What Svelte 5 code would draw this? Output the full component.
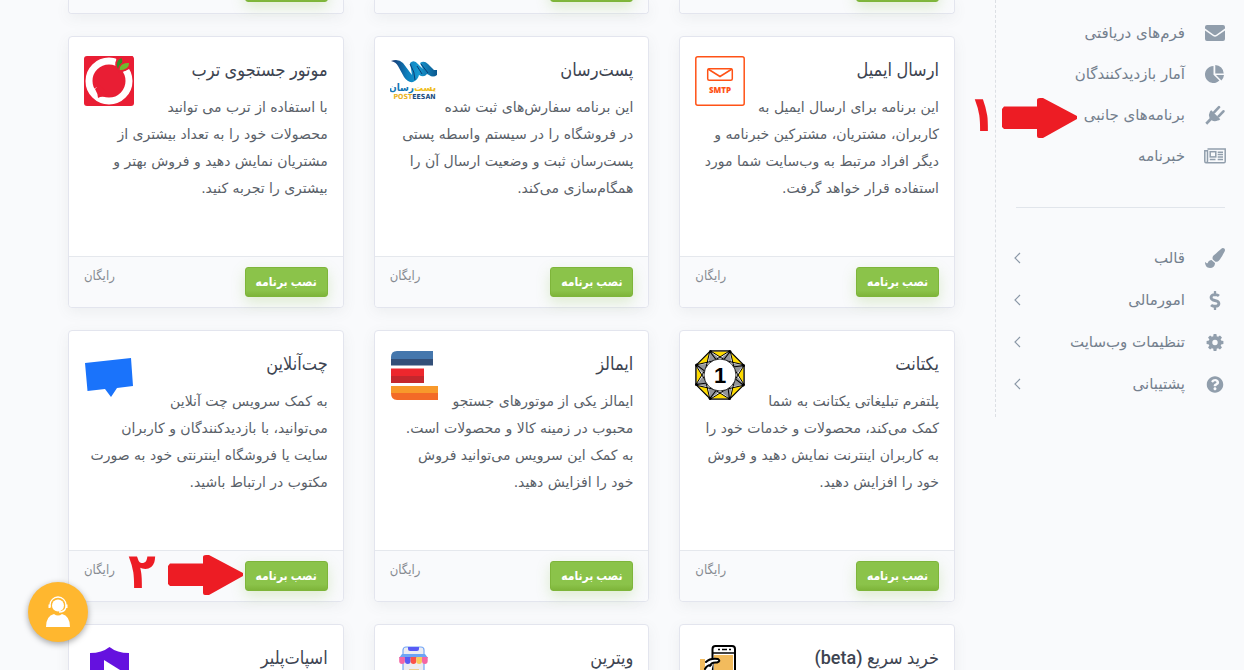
<script>
  const forms = [
    { icon: 'mail', label: 'فرم‌های دریافتی' },
    { icon: 'pie', label: 'آمار بازدیدکنندگان' },
    { icon: 'plug', label: 'برنامه‌های جانبی', step: '۱' },
    { icon: 'news', label: 'خبرنامه' }
  ];
  const settings = [
    { icon: 'brush', label: 'قالب' },
    { icon: 'dollar', label: 'امورمالی' },
    { icon: 'cog', label: 'تنظیمات وب‌سایت' },
    { icon: 'help', label: 'پشتیبانی' }
  ];
  const apps = [
    { logo: 'smtp', title: 'ارسال ایمیل', lines: ['این برنامه برای ارسال ایمیل به', 'کاربران، مشتریان، مشترکین خبرنامه و', 'دیگر افراد مرتبط به وب‌سایت شما مورد', 'استفاده قرار خواهد گرفت.'] },
    { logo: 'post', title: 'پست‌رسان', lines: ['این برنامه سفارش‌های ثبت شده', 'در فروشگاه را در سیستم واسطه پستی', 'پست‌رسان ثبت و وضعیت ارسال آن را', 'همگام‌سازی می‌کند.'] },
    { logo: 'torob', title: 'موتور جستجوی ترب', lines: ['با استفاده از ترب می توانید', 'محصولات خود را به تعداد بیشتری از', 'مشتریان نمایش دهید و فروش بهتر و', 'بیشتری را تجربه کنید.'] },
    { logo: 'yekta', title: 'یکتانت', lines: ['پلتفرم تبلیغاتی یکتانت به شما', 'کمک می‌کند، محصولات و خدمات خود را', 'به کاربران اینترنت نمایش دهید و فروش', 'خود را افزایش دهید.'] },
    { logo: 'emalls', title: 'ایمالز', lines: ['ایمالز یکی از موتورهای جستجو', 'محبوب در زمینه کالا و محصولات است.', 'به کمک این سرویس می‌توانید فروش', 'خود را افزایش دهید.'] },
    { logo: 'chat', title: 'چت‌آنلاین', step: '۲', lines: ['به کمک سرویس چت آنلاین', 'می‌توانید، با بازدیدکنندگان و کاربران', 'سایت یا فروشگاه اینترنتی خود به صورت', 'مکتوب در ارتباط باشید.'] },
    { logo: 'phone', title: 'خرید سریع (beta)', lines: [] },
    { logo: 'shop', title: 'ویترین', lines: [] },
    { logo: 'spot', title: 'اسپات‌پلیر', lines: [] }
  ];
  const ring = [0, 45, 90, 135, 180, 225, 270, 315];
</script>

{#snippet arrow()}
  <svg class="arrow" width="76" height="40" viewBox="0 0 76 40" aria-hidden="true"><path fill="#ed1c24" d="M2 8.500H35V2Q35 0 38 0H41L75 18V21L41 40H37Q35 40 35 38V31H2L0 29V11Z" /></svg>
{/snippet}

{#snippet icon(name)}
  {#if name === 'mail'}
    <svg width="20" height="16" viewBox="0 0 20 16"><path d="M0 3.600V2Q0 0 2 0H18Q20 0 20 2V3.600L11.300 9.700Q10 10.600 8.700 9.700ZM0 5.400L8 11Q10 12.300 12 11L20 5.400V14Q20 16 18 16H2Q0 16 0 14Z" /></svg>
  {:else if name === 'pie'}
    <svg width="20" height="18" viewBox="0 0 20 18"><path d="M8.500 1V9.700L14.400 15.600A8.500 8.500 0 1 1 8.500 1ZM10.300 0A8.500 8.500 0 0 1 18.700 8.400H10.300ZM11 10H19A8.500 8.500 0 0 1 16.400 15.400Z" /></svg>
  {:else if name === 'plug'}
    <svg width="20" height="20" viewBox="0 0 20 20"><path d="M6.300 5.300L15.300 14.300Q14 15.500 12.800 15.600A6.500 6.500 0 0 1 6.500 15.300L2.200 19.700L.3 17.800L4.600 13.300A6.500 6.500 0 0 1 4.800 7Q5.200 6 6.300 5.300Z" /><path d="M9.300 7.200L14 2.200M13.600 11.300L18.400 6.300" fill="none" stroke="currentColor" stroke-width="2.600" stroke-linecap="round" /></svg>
  {:else if name === 'news'}
    <svg width="22" height="16" viewBox="0 0 22 16"><g fill="none" stroke="currentColor" stroke-width="1.500"><path d="M3.500 1H21.200V13.500Q21.200 14.800 20 14.800H2Q.8 14.800 .8 13.300V2.700H3.500V13.300Q3.500 14.800 2 14.800" /><rect x="6.200" y="3.700" width="5.600" height="5.200" /><path d="M13.700 4.200H19M13.700 6.600H19M13.700 9H19M5.800 11.600H11.500M13.700 11.600H19" /></g></svg>
  {:else if name === 'brush'}
    <svg width="20" height="20" viewBox="0 0 512 512"><path d="M167.020 309.340c-40.120 2.580-76.530 17.860-97.190 72.300-2.350 6.210-8 9.980-14.590 9.980-11.110 0-45.460-27.670-55.250-34.350C0 439.620 37.930 512 128 512c75.860 0 128-43.770 128-120.190 0-3.110-.65-6.080-.97-9.130l-88.010-73.340zM457.890 0c-15.160 0-29.370 6.710-40.210 16.450C213.270 199.050 192 203.340 192 257.090c0 13.700 3.250 26.760 8.730 38.700l63.820 53.180c7.210 1.800 14.640 3.030 22.390 3.030 62.110 0 98.110-45.470 211.160-256.460 7.380-14.350 13.900-29.850 13.900-45.990C512 20.640 486 0 457.890 0z" /></svg>
  {:else if name === 'dollar'}
    <svg width="20" height="19" viewBox="0 0 288 512"><path d="M209.200 233.400l-108-31.600C88.700 198.200 80 186.500 80 173.500c0-16.300 13.200-29.500 29.500-29.500h66.300c12.200 0 24.200 3.700 34.200 10.500 6.100 4.100 14.300 3.100 19.500-2l34.800-34c7.100-6.900 6.100-18.400-1.800-24.500C238 74.800 207.400 64.100 176 64V16c0-8.800-7.200-16-16-16h-32c-8.800 0-16 7.200-16 16v48h-2.500C45.800 64-5.400 118.700.5 183.600c4.200 46.100 39.400 83.600 83.800 96.600l102.500 30c12.500 3.700 21.200 15.300 21.200 28.300 0 16.300-13.200 29.500-29.500 29.500h-66.300C100 368 88 364.300 78 357.500c-6.100-4.100-14.300-3.100-19.500 2l-34.800 34c-7.100 6.900-6.100 18.400 1.800 24.500 24.500 19.200 55.100 29.900 86.500 30v48c0 8.800 7.200 16 16 16h32c8.800 0 16-7.200 16-16v-48.200c46.600-.9 90.300-28.600 105.700-72.700 21.500-61.600-14.600-124.800-72.500-141.700z" /></svg>
  {:else if name === 'cog'}
    <svg width="20" height="17" viewBox="-8.500 -8.500 17 17"><circle r="4.600" fill="none" stroke="currentColor" stroke-width="3.800" />{#each ring as a}<path transform="rotate({a})" d="M-1.900 -5.800L-1.400 -8.400H1.400L1.900 -5.800Z" />{/each}</svg>
  {:else}
    <svg width="20" height="17" viewBox="0 0 512 512"><path d="M504 256c0 136.997-111.043 248-248 248S8 392.997 8 256C8 119.083 119.043 8 256 8s248 111.083 248 248zM262.655 90c-54.497 0-89.255 22.957-116.549 63.758-3.536 5.286-2.353 12.415 2.715 16.258l34.699 26.310c5.205 3.947 12.621 3.008 16.665-2.122 17.864-22.658 30.113-35.797 57.303-35.797 20.429 0 45.698 13.148 45.698 32.958 0 14.976-12.363 22.667-32.534 33.976C247.128 238.528 216 254.941 216 296v4c0 6.627 5.373 12 12 12h56c6.627 0 12-5.373 12-12v-1.333c0-28.462 83.186-29.647 83.186-106.667 0-58.002-60.165-102-116.531-102zM256 338c-25.365 0-46 20.635-46 46 0 25.364 20.635 46 46 46s46-20.636 46-46c0-25.365-20.635-46-46-46z" /></svg>
  {/if}
{/snippet}

{#snippet logo(name)}
  <svg class="logo" width="50" height="50" viewBox="0 0 50 50" aria-hidden="true">
    {#if name === 'smtp'}
      <g fill="none" stroke="#ff5216" stroke-width="1.500"><rect x=".8" y=".8" width="48.400" height="48.400" rx="2" /><rect x="12.700" y="12.700" width="24.600" height="11.600" rx="1.500" /><path d="M13 13L25 20.500L37 13" /></g>
      <text x="25" y="37" text-anchor="middle" class="smtp">SMTP</text>
    {:else if name === 'post'}
      <defs><linearGradient id="wave" x1="0" y1="0" x2="1" y2="0"><stop offset="0" stop-color="#17316b" /><stop offset=".35" stop-color="#0d7fbd" /><stop offset=".6" stop-color="#1898d0" /><stop offset="1" stop-color="#0b578e" /></linearGradient></defs>
      <path fill="url(#wave)" d="M1 5Q8 2 13 7L22 19Q21 13 20 7Q24 3 28 8L33 13L30 7Q34 4 38 8L44 14H47V19Q43 22 39 19L37 18Q34 22 29 19Q28 24 23 26Q18 27 14 21L8 10Q6 6 1 5Z" />
      <path d="M20 8Q25 16 25 24M31 8L38 17M27 10L32 18" stroke="#0a3d75" fill="none" stroke-width="1" />
      <text x="11.500" y="35" text-anchor="middle" class="post-fa" fill="#1477b4">رسان</text>
      <text x="35" y="35" text-anchor="middle" class="post-fa" fill="#efbd20">پست</text>
      <text x="24.500" y="43" text-anchor="middle" class="post-en"><tspan fill="#e9b21c">POST</tspan><tspan fill="#174b80">EESAN</tspan></text>
    {:else if name === 'torob'}
      <rect width="50" height="50" rx="3" fill="#e91e34" />
      <circle cx="25" cy="25" r="20" fill="none" stroke="#fff" stroke-width="7" />
      <path fill="#fff" d="M8 34L12 44L22 44L20 38L13 31Z" />
      <path fill="#e91e34" d="M11 33Q14 38 14 42Q17 40 21 41L23 36L15 29Z" />
      <g stroke="#e91e34" stroke-width="1.500"><path fill="#e91e34" d="M33 13L33 0H48V11L36 16Z" />
      <path fill="#2f8f26" d="M33 13Q29.500 5 37.500 1Q40 4 38.500 8L35 14Z" /><path fill="#6cbd2f" d="M35 15Q34 6 46 6Q46 15 35 15Z" /></g>
    {:else if name === 'yekta'}
      <path d="M15.500 1H34.500L49 15.500V34.500L34.500 49H15.500L1 34.500V15.500Z" fill="#fff" stroke="#000" stroke-width="1.500" />
      {#each ring as a}
        <g transform="rotate({a} 25 25)"><path fill="#fedb00" d="M17 1.800H33L25 7Z" /><path fill="#929498" d="M16 2L24 8L17 11.500ZM34 2L26 8L33 11.500Z" /><path d="M15.500 1L33 12M34.500 1L17 12M15.500 1L17 12M34.500 1L33 12" stroke="#000" fill="none" stroke-width="1" /><circle cx="15.500" cy="1.500" r="1.500" /></g>
      {/each}
      <circle cx="25" cy="25" r="16" fill="#fff" stroke="#000" stroke-width=".8" />
      <text x="25" y="33" text-anchor="middle" class="one">1</text>
    {:else if name === 'emalls'}
      <path fill="#4577ad" d="M1 9V7Q1 1 7 1H43V9Z" /><path fill="#334f78" d="M1 9H43V15.500H1Z" /><path fill="#ed272d" d="M1 18.500H34V26H1Z" /><path fill="#c4272d" d="M1 26H34V33H1Z" /><path fill="#f8992b" d="M1 36H48V43H1Z" /><path fill="#f36a27" d="M1 43H48V50H7Q1 50 1 43Z" />
    {:else if name === 'chat'}
      <path fill="#1a73fb" d="M1 13L47 8L49 36L33 38L27 47L21 39L3.500 41Z" />
    {:else if name === 'phone'}
      <path fill="#f2bb5d" d="M5 15H10V50H5ZM19 11H38V50H19Z" /><rect x="17.500" y="2" width="22.500" height="46" rx="3" fill="none" stroke="#000" stroke-width="2" /><path d="M17 9H40" stroke="#000" stroke-width="1.500" /><path d="M23 5.500H25M27 5.500H32M34 5.500H36" stroke="#000" stroke-width="1.500" />
      <path fill="#fff" d="M11 18Q15 14 22 15Q26 16 23 18L18 20L15 33H10Z" /><path d="M11 18Q15 14 23 15Q26 17 22 18.500Q16 18 15 22M10 25Q12 21 16 21" fill="none" stroke="#000" stroke-width="2" stroke-linecap="round" />
    {:else if name === 'shop'}
      <rect x="13" y="3" width="21" height="44" rx="3" fill="#ececf1" stroke="#75a7f7" stroke-width="1.200" /><path d="M18 3H29V5Q29 7 27 7H20Q18 7 18 5Z" fill="#585bf5" />
      <path d="M12 10H35L38 14H9Z" fill="#6ca4f5" />
      {#each ['#f466a4', '#585bf5', '#fa5148', '#f8cb58', '#f466a4'] as color, i}<path transform="translate({i * 5.700} 0)" d="M9.200 13H14.900V17A2.850 3 0 0 1 9.200 17Z" fill={color} />{/each}
      <path d="M19 25H29V33H19Z" fill="#ecd08e" />
    {:else}
      <path fill="#6511df" d="M6 9Q18 9 25.500 3Q33 9 45 9V32Q43 42 25.500 49Q8 42 6 32Z" /><path fill="#fff" d="M20 16L36 26L20 36Z" />
    {/if}
  </svg>
{/snippet}

<div class="page" dir="rtl" lang="fa">
  <nav class="sidebar">
    <ul class="menu">
      {#each forms as item}
        <li><a href="#{item.icon}"><span class="icon">{@render icon(item.icon)}</span><span>{item.label}</span></a>
          {#if item.step}<span class="marker menu-marker">{@render arrow()}<b>{item.step}</b></span>{/if}
        </li>
      {/each}
    </ul>
    <hr />
    <ul class="menu wide">
      {#each settings as item}
        <li><a href="#{item.icon}"><span class="icon">{@render icon(item.icon)}</span><span>{item.label}</span>
          <svg class="chevron" width="12" height="12" viewBox="0 0 12 12"><path d="M6 1L1 6L6 11" /></svg></a></li>
      {/each}
    </ul>
  </nav>

  <main class="grid">
    {#each [1, 2, 3] as n}
      <article class="card tail"><footer><button type="button" aria-label="نصب برنامه"></button></footer></article>
    {/each}
    {#each apps as app}
      <article class="card">
        <div class="body">
          {@render logo(app.logo)}
          <h3>{app.title}</h3>
          <p>{#each app.lines as line}{line}<br />{/each}</p>
        </div>
        {#if app.lines.length}
          <footer>
            <button type="button">نصب برنامه</button>
            <span class="price">رایگان</span>
            {#if app.step}<span class="marker card-marker">{@render arrow()}<b>{app.step}</b></span>{/if}
          </footer>
        {/if}
      </article>
    {/each}
  </main>

  <button class="support" type="button" aria-label="پشتیبانی">
    <svg width="26" height="32" viewBox="0 0 26 32"><circle cx="13" cy="9.500" r="6" fill="#fff" /><path d="M5 11V9A8 8 0 0 1 21 9V11Q20 16 14 16" fill="none" stroke="#fff" stroke-width="1.300" /><path d="M4.500 8.500V12M21.500 8.500V12" stroke="#fff" stroke-width="2" /><path d="M1 31Q1 20 9 18Q13 21 17 18Q25 20 25 31Z" fill="#fff" /></svg>
  </button>
</div>

<style>
  :global(body) { margin: 0; background: #f9fafc; }
  .page {
    display: flex;
    align-items: flex-start;
    height: 100vh;
    overflow: hidden;
    background: #f9fafc;
    color: #5a6169;
    font-family: "DejaVu Sans", sans-serif;
  }
  .sidebar {
    box-sizing: border-box;
    flex: 0 0 249px;
    padding: 12px 19px 12px 18px;
    border-left: 1px dashed #dcdfe4;
  }
  .menu { margin: 0; padding: 0; list-style: none; }
  .menu li { position: relative; }
  .menu a {
    display: flex;
    align-items: center;
    height: 41px;
    color: #74808e;
    font-size: 15px;
    text-decoration: none;
    white-space: nowrap;
  }
  .menu.wide a { height: 42px; }
  .icon { display: flex; justify-content: center; width: 20px; margin-left: 20px; color: #919eac; }
  .icon svg { flex: none; fill: currentColor; }
  .chevron { margin-right: auto; fill: none; stroke: #8b98a7; stroke-width: 1.200; }
  hr { height: 1px; margin: 31px 0 29px 2px; border: 0; background: #e1e5eb; }
  .grid {
    flex: 1;
    display: grid;
    grid-template-columns: repeat(3, minmax(0, 1fr));
    gap: 22px 30px;
    padding: 0 40px 0 68px;
  }
  .card {
    display: flex;
    flex-direction: column;
    box-sizing: border-box;
    min-height: 272px;
    background: #fff;
    border: 1px solid #e3e5ee;
    border-radius: 4px;
    box-shadow: 0 4px 14px rgba(90, 97, 105, 0.08);
  }
  .body { flex: 1; padding: 19px 15px 0; }
  .logo { float: left; }
  h3 { margin: 0; color: #3d4451; font: 500 18px/27px Roboto, "DejaVu Sans Condensed", "DejaVu Sans", sans-serif; }
  p { margin: 11px 0 0; font-size: 14px; line-height: 27px; white-space: nowrap; }
  footer {
    position: relative;
    display: flex;
    justify-content: space-between;
    align-items: flex-start;
    box-sizing: border-box;
    height: 51px;
    padding: 10px 15px;
    background: #f9fafc;
    border-top: 1px solid #e5e8ed;
    border-radius: 0 0 4px 4px;
  }
  footer button {
    flex: none;
    width: 83px;
    height: 30px;
    padding: 0;
    border: 1px solid #7eb53a;
    border-radius: 3px;
    background: linear-gradient(#8bc34a 80%, #7eb53a);
    box-shadow: 0 5px 14px rgba(139, 195, 74, 0.25);
    color: #fff;
    font: bold 12px/26px Roboto, "DejaVu Sans Condensed", "DejaVu Sans", sans-serif;
  }
  .tail { min-height: 0; border-top: 0; border-radius: 0 0 4px 4px; }
  .tail footer { align-items: flex-end; height: 13px; padding: 0 15px 11px; border: 0; }
  .price { color: #868a91; font: 13px/18px Roboto, "DejaVu Sans Condensed", "DejaVu Sans", sans-serif; }
  .marker {
    position: absolute;
    display: flex;
    align-items: center;
    color: #ed1c24;
  }
  .marker b { padding-bottom: 8px; font: bold 50px/40px "DejaVu Sans Condensed", "DejaVu Sans", sans-serif; }
  .menu-marker { top: 0; right: 147px; gap: 6px; }
  .card-marker { top: 0; right: 99px; gap: 12px; }
  .support {
    position: absolute;
    left: 28px;
    bottom: 28px;
    display: grid;
    place-items: center;
    width: 60px;
    height: 60px;
    padding: 0;
    border: 0;
    border-radius: 50%;
    background: #ffb72f;
    box-shadow: 0 2px 6px rgba(0, 0, 0, 0.35);
  }
  .smtp { fill: #ff5216; font: 800 8px "Open Sans", sans-serif; }
  .post-fa { font: bold 10px "DejaVu Sans Condensed", sans-serif; }
  .post-en { font: bold 7px "DejaVu Sans Condensed", sans-serif; }
  .one { font: bold 22px "Liberation Sans", sans-serif; }
</style>
